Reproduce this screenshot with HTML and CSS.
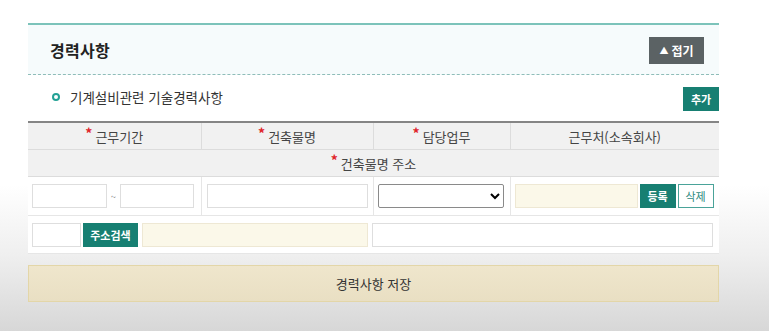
FILE: index.html
```html
<!DOCTYPE html>
<html lang="ko">
<head>
<meta charset="utf-8">
<title>경력사항</title>
<link rel="stylesheet" href="styles.css">
</head>
<body>
<div class="section">
  <div class="sec-head">
    <h2 class="sec-title">경력사항</h2>
    <button class="btn-fold" type="button"><span class="tri">▲</span>접기</button>
  </div>
  <div class="sub-row">
    <div class="sub-title"><span class="bullet"></span>기계설비관련 기술경력사항</div>
    <button class="btn-teal btn-add" type="button">추가</button>
  </div>
  <table class="grid">
    <colgroup>
      <col class="c1"><col class="c2"><col class="c3"><col class="c4">
    </colgroup>
    <thead>
      <tr class="hrow">
        <th><span class="req">*</span>근무기간</th>
        <th><span class="req">*</span>건축물명</th>
        <th><span class="req">*</span>담당업무</th>
        <th>근무처(소속회사)</th>
      </tr>
      <tr class="hrow">
        <th colspan="4"><span class="req">*</span>건축물명 주소</th>
      </tr>
    </thead>
    <tbody>
      <tr class="irow">
        <td>
          <div class="period">
            <input class="inp w75" type="text">
            <span class="tilde">~</span>
            <input class="inp w74" type="text">
          </div>
        </td>
        <td><input class="inp full" type="text"></td>
        <td><select class="sel"><option></option></select></td>
        <td>
          <div class="company">
            <input class="inp beige w123" type="text">
            <button class="btn-teal btn-sm" type="button">등록</button>
            <button class="btn-line btn-sm" type="button">삭제</button>
          </div>
        </td>
      </tr>
      <tr class="arow">
        <td colspan="4">
          <div class="addr">
            <input class="inp w49" type="text">
            <button class="btn-teal btn-search" type="button">주소검색</button>
            <input class="inp beige w226" type="text">
            <input class="inp w341" type="text">
          </div>
        </td>
      </tr>
    </tbody>
  </table>
  <button class="btn-save" type="button">경력사항 저장</button>
</div>
</body>
</html>
```
FILE: styles.css
```css
html, body {
  height: 100%;
}
body {
  margin: 0;
  font-family: "Noto Sans CJK KR", "Noto Sans", sans-serif;
  color: #333;
  background: linear-gradient(to bottom, #ffffff 0, #ffffff 185px, #efefef 255px, #d7d7d7 331px);
}
.section {
  width: 691px;
  margin-left: 28px;
  padding-top: 23px;
}
.sec-head {
  border-top: 2px solid #7cc3ba;
  border-bottom: 1px dashed #8fbdb9;
  background: #f6fbfc;
  display: flex;
  align-items: center;
  justify-content: space-between;
  padding: 0 15px 0 22px;
  box-sizing: border-box;
  height: 52px;
}
.sec-title {
  margin: 0;
  font-size: 16px;
  font-weight: 700;
  color: #222;
  letter-spacing: 0.3px;
}
.btn-fold {
  width: 55px;
  height: 27px;
  margin-top: 1px;
  border: 0;
  background: #5b6264;
  color: #fff;
  font-family: inherit;
  font-size: 12px;
  font-weight: 700;
  padding: 0;
  display: flex;
  align-items: center;
  justify-content: center;
}
.tri {
  font-size: 9px;
  margin-right: 3px;
}
.sub-row {
  height: 46px;
  display: flex;
  align-items: center;
  justify-content: space-between;
  padding-left: 24px;
}
.sub-title {
  display: flex;
  align-items: center;
  font-size: 13.5px;
  color: #333;
  margin-top: -2px;
}
.bullet {
  width: 4px;
  height: 4px;
  border: 2px solid #23a195;
  border-radius: 50%;
  margin-right: 10px;
}
.btn-teal {
  border: 0;
  background: #177f72;
  color: #fff;
  font-family: inherit;
  font-weight: 700;
  padding: 0;
}
.btn-add {
  width: 36px;
  height: 24px;
  font-size: 11px;
  margin-top: 1px;
}
.grid {
  width: 691px;
  border-collapse: collapse;
  border-top: 2px solid #858585;
  background: #fff;
  table-layout: fixed;
}
.c1 { width: 173px; }
.c2 { width: 172px; }
.c3 { width: 137px; }
.c4 { width: 209px; }
.hrow th {
  height: 26px;
  padding: 0;
  background: #f1f1f1;
  border: 1px solid #dcdcdc;
  border-top: 0;
  font-weight: 400;
  font-size: 13px;
  color: #444;
}
.grid th:first-child, .grid td:first-child { border-left: 0; }
.grid th:last-child, .grid td:last-child { border-right: 0; }
.req {
  color: #e0242a;
  font-size: 14px;
  font-weight: 700;
  position: relative;
  top: -3px;
  margin-right: 3px;
}
.irow td {
  height: 38px;
  padding: 0 4px;
  border: 1px solid #e6e6e6;
  border-top: 0;
  vertical-align: middle;
}
.irow td:nth-child(2) { padding: 0 5px; }
.arow td {
  height: 37px;
  padding: 0 4px;
  border-bottom: 1px solid #e6e6e6;
  vertical-align: middle;
}
.inp {
  box-sizing: border-box;
  height: 24px;
  border: 1px solid #dedede;
  background: #fff;
  margin: 0;
  padding: 0 4px;
  font-family: inherit;
  display: block;
}
.beige {
  background: #fbf8e9;
  border-color: #eee8d4;
}
.w75 { width: 75px; }
.w74 { width: 74px; }
.w123 { width: 123px; }
.w49 { width: 49px; }
.w226 { width: 226px; }
.w341 { width: 341px; }
.full { width: 100%; }
.period, .company, .addr {
  display: flex;
  align-items: center;
}
.tilde {
  width: 13px;
  text-align: center;
  font-size: 9px;
  color: #777;
}
.sel {
  display: block;
  width: 126px;
  height: 24px;
  border: 1px solid #8a8a8a;
  border-radius: 2px;
  background: #fff;
  font-family: inherit;
}
.btn-sm {
  width: 36px;
  height: 24px;
  font-size: 11px;
  margin-left: 2px;
}
.btn-line {
  background: #fff;
  border: 1px solid #4aa399;
  color: #2b8a7e;
  font-family: inherit;
  padding: 0;
  font-weight: 400;
}
.btn-search {
  width: 55px;
  height: 24px;
  font-size: 11px;
  margin: 0 4px 0 2px;
}
.addr .w341 { margin-left: 4px; }
.btn-save {
  display: block;
  width: 691px;
  height: 37px;
  margin-top: 11px;
  border: 1px solid #e3d6a8;
  background: linear-gradient(to bottom, #efe6cc, #e9dfc3);
  font-family: inherit;
  font-size: 13px;
  color: #333;
  padding: 0;
}
```
